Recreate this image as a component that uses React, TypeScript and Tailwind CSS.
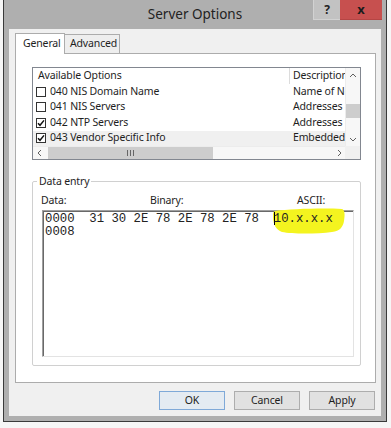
import React from "react";

const rows = [
  { on: false, name: "040 NIS Domain Name", desc: "Name of Network Information Service domain" },
  { on: false, name: "041 NIS Servers", desc: "Addresses of NIS servers" },
  { on: true, name: "042 NTP Servers", desc: "Addresses of Network Time Protocol servers" },
  { on: true, name: "043 Vendor Specific Info", desc: "Embedded vendor-specific options" },
];

function Check({ on }: { on: boolean }) {
  return (
    <span className="w-[10px] h-[10px] border border-[#333] bg-white shrink-0 flex items-center justify-center">
      {on && (
        <svg width="8" height="8" viewBox="0 0 8 8">
          <path d="M1 4.2 L3 6.3 L7 1.4" fill="none" stroke="#111" strokeWidth="1.5" />
        </svg>
      )}
    </span>
  );
}

function Chevron({ dir }: { dir: "l" | "r" | "u" | "d" }) {
  const d = {
    l: "M5 1 L2 4 L5 7",
    r: "M3 1 L6 4 L3 7",
    u: "M1 5 L4 2 L7 5",
    d: "M1 3 L4 6 L7 3",
  }[dir];
  return (
    <svg width="8" height="8" viewBox="0 0 8 8">
      <path d={d} fill="none" stroke="#606060" strokeWidth="1" />
    </svg>
  );
}

function Btn({ label, primary }: { label: string; primary?: boolean }) {
  return (
    <div
      className={
        primary
          ? "w-[66px] h-[19px] border border-[#7fa9d8] bg-[#e4ebf2] flex items-center justify-center"
          : "w-[66px] h-[19px] border border-[#adadad] bg-[#e1e1e1] flex items-center justify-center"
      }
    >
      {label}
    </div>
  );
}

export default function App() {
  return (
    <div className="w-[391px] h-[428px] bg-[#f6f6f6] overflow-hidden font-['Noto_Sans',sans-serif] text-[10.5px] tracking-[-0.15px] text-[#1e1e1e]">
      {/* Window */}
      <div className="ml-[3px] w-[384px] h-[422px] flex flex-col bg-[#afafaf] border-x border-b border-[#3a3a3a]">
        {/* Title bar */}
        <div className="h-[29px] shrink-0 relative flex items-center justify-center">
          <span className="text-[13.5px] tracking-normal text-[#222] pb-[1px]">Server Options</span>
          <div className="absolute top-0 right-[4px] flex">
            <div className="w-[27px] h-[20px] bg-[#c2c2c2] border-l border-b border-[#d2d2d2] flex items-center justify-center text-[12px] font-bold text-[#222]">
              ?
            </div>
            <div className="w-[42px] h-[20px] bg-[#c7504f] border-b border-[#b54544] flex items-center justify-center text-[13px] font-bold text-[#1c1c1c] leading-none">
              x
            </div>
          </div>
        </div>

        {/* Client area */}
        <div className="flex-1 px-[5px] pb-[5px] flex">
          <div className="flex-1 bg-[#f0f0f0] flex flex-col pt-[4px] pl-px">
            {/* Tabs */}
            <div className="flex items-end h-[21px] -mb-px pl-[5px] relative z-10">
              <div className="w-[50px] h-[21px] pl-[7px] border border-b-0 border-[#acacac] bg-white flex items-center pb-[1px]">
                General
              </div>
              <div className="w-[55px] h-[19px] mb-px pl-[5px] border-t border-r border-[#acacac] bg-[#eeeeee] flex items-center">
                Advanced
              </div>
            </div>

            {/* Tab panel */}
            <div className="ml-[5px] w-[361px] h-[330px] border border-[#acacac] bg-white pl-[16px] pt-[13px]">
              {/* List view */}
              <div className="w-[329px] h-[93px] border border-[#828790] grid grid-cols-[312px_15px] grid-rows-[78px_13px]">
                <div className="overflow-hidden">
                  <div className="h-[16px] flex items-center whitespace-nowrap">
                    <div className="w-[256px] shrink-0 pl-[5px]">Available Options</div>
                    <div className="shrink-0 h-full border-l border-[#dcdcdc] pl-[3px] flex items-center">Description</div>
                  </div>
                  {rows.map((r, i) => (
                    <div
                      key={r.name}
                      className={
                        i === 3
                          ? "h-[15.5px] flex items-center whitespace-nowrap bg-[#f0f0f0]"
                          : "h-[15.5px] flex items-center whitespace-nowrap"
                      }
                    >
                      <div className="w-[256px] shrink-0 pl-[3px] flex items-center gap-[4px]">
                        <Check on={r.on} />
                        <span>{r.name}</span>
                      </div>
                      <div className="shrink-0 pl-[4px]">{r.desc}</div>
                    </div>
                  ))}
                </div>
                {/* vertical scrollbar */}
                <div className="bg-[#f7f7f7] flex flex-col border-l border-[#ececec]">
                  <div className="h-[15px] flex items-center justify-center">
                    <Chevron dir="u" />
                  </div>
                  <div className="h-[21px]" />
                  <div className="h-[14px] bg-[#cdcdcd]" />
                  <div className="flex-1" />
                  <div className="h-[14px] flex items-center justify-center">
                    <Chevron dir="d" />
                  </div>
                </div>
                {/* horizontal scrollbar */}
                <div className="bg-[#f7f7f7] flex items-stretch border-t border-[#ececec]">
                  <div className="w-[13px] flex items-center justify-center">
                    <Chevron dir="l" />
                  </div>
                  <div className="ml-[2px] w-[165px] bg-[#cdcdcd] flex items-center justify-center gap-[2px]">
                    <span className="w-px h-[6px] bg-[#666]" />
                    <span className="w-px h-[6px] bg-[#666]" />
                    <span className="w-px h-[6px] bg-[#666]" />
                  </div>
                  <div className="flex-1" />
                  <div className="w-[13px] flex items-center justify-center">
                    <Chevron dir="r" />
                  </div>
                </div>
                <div className="bg-[#f0f0f0]" />
              </div>

              {/* Data entry group */}
              <fieldset className="mt-[14px] w-[329px] h-[192px] border border-[#d0d0d0] rounded-[2px]">
                <legend className="ml-[4px] px-[2px] leading-[14px]">Data entry</legend>
                <div className="mt-[6px] h-[14px] flex items-center pl-[8px]">
                  <span className="w-[109px]">Data:</span>
                  <span className="w-[147px]">Binary:</span>
                  <span>ASCII:</span>
                </div>
                <div className="relative mt-[2px] ml-[9px] w-[312px] h-[147px] bg-white border border-t-[#a0a0a0] border-l-[#a0a0a0] border-r-[#e3e3e3] border-b-[#e3e3e3] shadow-[inset_1px_1px_0_#696969]">
                  <svg className="absolute left-[229px] top-[-4px]" width="74" height="28" viewBox="0 0 74 28">
                    <path
                      d="M3 4 C18 2 50 1 70 2 C73 3 73 8 72 14 C71 20 68 24 60 25 C45 27 20 27 10 25 C4 23 1 17 1 10 C1 6 1 5 3 4 Z"
                      fill="#f4f41f"
                    />
                  </svg>
                  <div className="relative pl-[2px] pt-[1px] font-['Liberation_Mono',monospace] text-[12.3px] tracking-normal leading-[12.5px] text-[#222] whitespace-pre">
                    <div>
                      {"0000  31 30 2E 78 2E 78 2E 78  "}
                      <span className="inline-block w-0 h-[13px] border-l border-black -mr-px align-[-3px]" />
                      {"10.x.x.x"}
                    </div>
                    <div>0008</div>
                  </div>
                </div>
              </fieldset>
            </div>

            {/* Buttons */}
            <div className="mt-[8px] flex justify-end gap-[9px] pr-[6px]">
              <Btn label="OK" primary />
              <Btn label="Cancel" />
              <Btn label="Apply" />
            </div>
          </div>
        </div>
      </div>
    </div>
  );
}
